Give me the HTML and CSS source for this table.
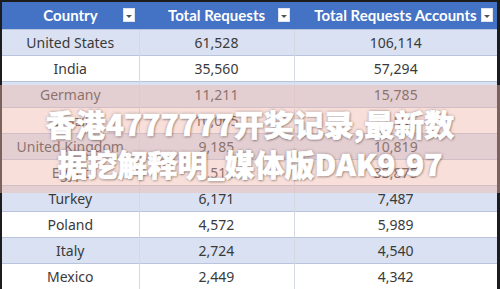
FILE: index.html
```html
<!DOCTYPE html>
<html lang="en">
<head>
    <meta charset="UTF-8">
    <meta name="viewport" content="width=device-width, initial-scale=1.0">
    <title>香港4777777开奖记录</title>
    <link rel="stylesheet" href="styles.css">
</head>
<body>
    <div class="frame">
        <table class="stats">
            <colgroup>
                <col class="col-country">
                <col class="col-requests">
                <col class="col-accounts">
            </colgroup>
            <thead>
                <tr>
                    <th><div class="head-cell"><span></span><span>Country</span><span class="drop"></span></div></th>
                    <th><div class="head-cell"><span></span><span>Total Requests</span><span class="drop"></span></div></th>
                    <th><div class="head-cell"><span></span><span>Total Requests Accounts</span><span class="drop"></span></div></th>
                </tr>
            </thead>
            <tbody>
                <tr><td>United States</td><td>61,528</td><td>106,114</td></tr>
                <tr><td>India</td><td>35,560</td><td>57,294</td></tr>
                <tr><td>Germany</td><td>11,211</td><td>15,785</td></tr>
                <tr><td>Brazil</td><td>10,065</td><td>12,596</td></tr>
                <tr><td>United Kingdom</td><td>9,185</td><td>10,819</td></tr>
                <tr><td>Egypt</td><td>7,514</td><td>33,875</td></tr>
                <tr><td>Turkey</td><td>6,171</td><td>7,487</td></tr>
                <tr><td>Poland</td><td>4,572</td><td>5,989</td></tr>
                <tr><td>Italy</td><td>2,724</td><td>4,540</td></tr>
                <tr><td>Mexico</td><td>2,449</td><td>4,342</td></tr>
            </tbody>
        </table>

        <!-- caption band laid over the table -->
        <div class="banner">
            <h1>香港4777777开奖记录,最新数<br>据挖解释明_媒体版DAK9.97</h1>
        </div>
    </div>
</body>
</html>
```

FILE: styles.css
```css
/* General Styling */
* {
    box-sizing: border-box;
}

body {
    margin: 0;
    background-color: #1c1c1e;
    font-family: "Noto Sans", Arial, sans-serif;
}

.frame {
    position: relative;
    width: 500px;
    height: 289px;
    padding: 2px 3px 0 2px;
    overflow: hidden;
}

/* Table */
.stats {
    width: 495px;
    border-collapse: collapse;
    table-layout: fixed;
}

.col-country {
    width: 137px;
}

.col-requests {
    width: 155px;
}

.stats th {
    height: 27px;
    padding: 0;
    background-color: #4472c4; /* Excel blue header */
    color: #fff;
    font-family: Lato, "Liberation Sans", sans-serif;
    font-weight: 700;
    font-size: 15px;
}

.head-cell {
    display: grid;
    grid-template-columns: 16px 1fr 16px;
    align-items: center;
}

.drop {
    width: 12px;
    height: 14px;
    background-color: #fff;
    border: 1px solid #dfe5f0;
    display: flex;
    align-items: center;
    justify-content: center;
}

.drop::after {
    content: "";
    margin-top: 3px;
    border-left: 3px solid transparent;
    border-right: 3px solid transparent;
    border-top: 3px solid #555;
}

.stats td {
    height: 26px;
    padding: 0;
    text-align: center;
    font-size: 14px;
    color: #3a3a3a;
    border-top: 1px solid #b8c4dc;
    border-left: 1px solid #d4d8e0;
}

.stats td:first-child {
    border-left: none;
}

.stats tbody tr:nth-child(odd) {
    background-color: #d9e1f2;
}

.stats tbody tr:nth-child(even) {
    background-color: #fff;
}

/* Caption band */
.banner {
    position: absolute;
    left: 0;
    right: 0;
    top: 85px;
    height: 108px;
    padding-top: 8px;
    background-color: rgba(240, 185, 170, 0.45);
    display: flex;
    align-items: center;
    justify-content: center;
}

.banner h1 {
    margin: 0;
    text-align: center;
    color: #fff;
    font-family: "Noto Sans CJK SC", "Noto Sans", sans-serif;
    font-weight: 900;
    font-size: 30px;
    line-height: 40px;
    -webkit-text-stroke: 0.7px #fff;
    text-shadow: 0 0 3px rgba(60, 40, 40, 0.55), 1px 1px 2px rgba(60, 40, 40, 0.4);
}
```
